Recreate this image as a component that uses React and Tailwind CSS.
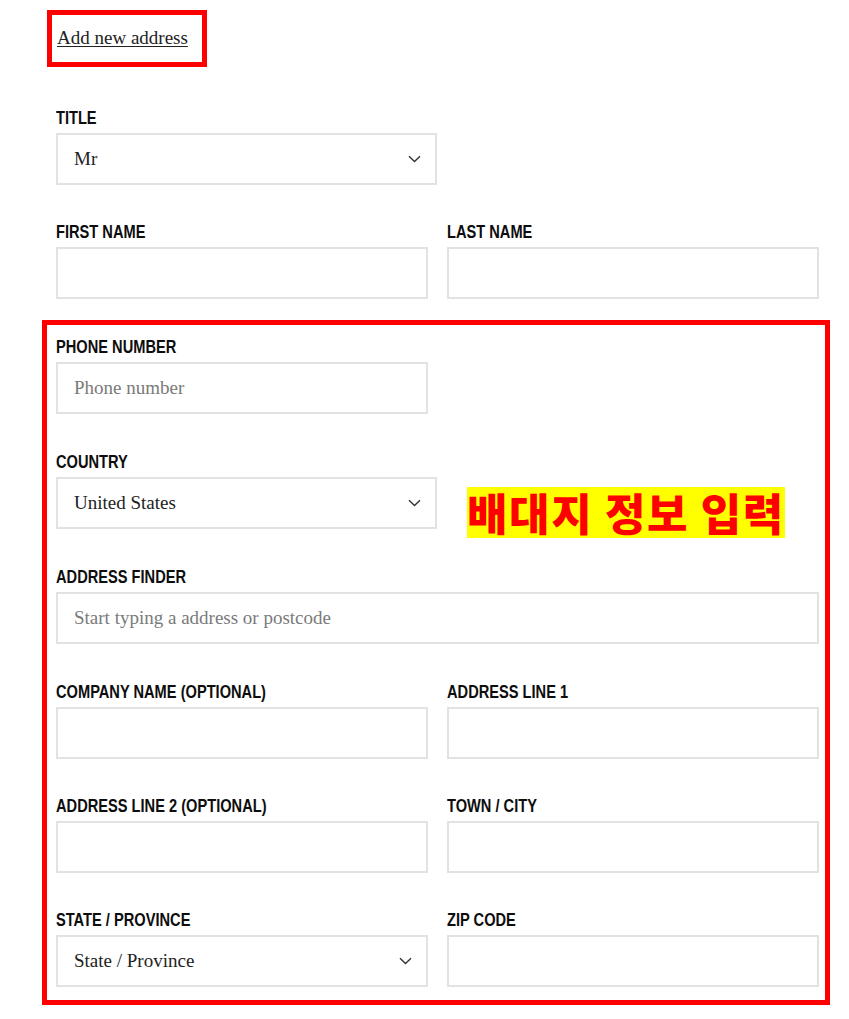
function Label({ children }) {
    return (
        <div className="mb-[5px] h-5 leading-5">
            <span className="inline-block origin-left scale-x-[0.77] whitespace-nowrap text-[19px] font-bold text-[#0d0d0d] [font-family:'Liberation_Sans',sans-serif]">
                {children}
            </span>
        </div>
    );
}

function TextInput({ placeholder }) {
    return (
        <input
            type="text"
            placeholder={placeholder}
            className="block h-[52px] w-full border-2 border-[#e2e2e2] bg-white px-4 text-[19px] text-[#222] outline-none placeholder:text-[#7a7a7a] [font-family:'Liberation_Serif',serif]"
        />
    );
}

function SelectBox({ value }) {
    return (
        <div className="flex h-[52px] w-full items-center justify-between border-2 border-[#e2e2e2] bg-white pl-4 pr-[14px] text-[19px] text-[#222] [font-family:'Liberation_Serif',serif]">
            <span>{value}</span>
            <svg width="13" height="8" viewBox="0 0 13 8" fill="none">
                <path d="M1 1.2l5.5 5.3 5.5-5.3" stroke="#333" strokeWidth="1.4" />
            </svg>
        </div>
    );
}

function Field({ label, children }) {
    return (
        <div>
            <Label>{label}</Label>
            {children}
        </div>
    );
}

export default function App() {
    return (
        <div className="min-h-[1019px] w-[849px] bg-white pl-[56px] pt-[10px]">
            <div className="-ml-[9px] flex h-[57px] w-[160px] items-center border-[5px] border-[#ff0000] pl-[5px]">
                <a href="#" className="text-[19px] text-[#222] underline underline-offset-2 [font-family:'Liberation_Serif',serif]">
                    Add new address
                </a>
            </div>

            <div className="mt-[41px] w-[763px]">
                <div className="w-[381px]">
                    <Field label="TITLE">
                        <SelectBox value="Mr" />
                    </Field>
                </div>

                <div className="mt-[37px] grid grid-cols-2 gap-x-[19px]">
                    <Field label="FIRST NAME">
                        <TextInput />
                    </Field>
                    <Field label="LAST NAME">
                        <TextInput />
                    </Field>
                </div>

                {/* shipping info section */}
                <div className="relative -ml-[14px] mt-[21px] w-[788px] border-[5px] border-[#ff0000] pb-[13px] pl-[9px] pr-[6px] pt-[12px]">
                    <div className="w-[372px]">
                        <Field label="PHONE NUMBER">
                            <TextInput placeholder="Phone number" />
                        </Field>
                    </div>

                    <div className="mt-[38px] w-[381px]">
                        <Field label="COUNTRY">
                            <SelectBox value="United States" />
                        </Field>
                    </div>

                    <div className="mt-[38px]">
                        <Field label="ADDRESS FINDER">
                            <TextInput placeholder="Start typing a address or postcode" />
                        </Field>
                    </div>

                    <div className="mt-[38px] grid grid-cols-2 gap-x-[19px] gap-y-[37px]">
                        <Field label="COMPANY NAME (OPTIONAL)">
                            <TextInput />
                        </Field>
                        <Field label="ADDRESS LINE 1">
                            <TextInput />
                        </Field>
                        <Field label="ADDRESS LINE 2 (OPTIONAL)">
                            <TextInput />
                        </Field>
                        <Field label="TOWN / CITY">
                            <TextInput />
                        </Field>
                        <Field label="STATE / PROVINCE">
                            <SelectBox value="State / Province" />
                        </Field>
                        <Field label="ZIP CODE">
                            <TextInput />
                        </Field>
                    </div>

                    <div className="absolute left-[420px] top-[162px] bg-[#ffff00] text-[44px] font-black leading-[51px] tracking-[1.6px] text-[#ff0000] [font-family:'Noto_Sans_CJK_KR',sans-serif]">
                        배대지 정보 입력
                    </div>
                </div>
            </div>
        </div>
    );
}
